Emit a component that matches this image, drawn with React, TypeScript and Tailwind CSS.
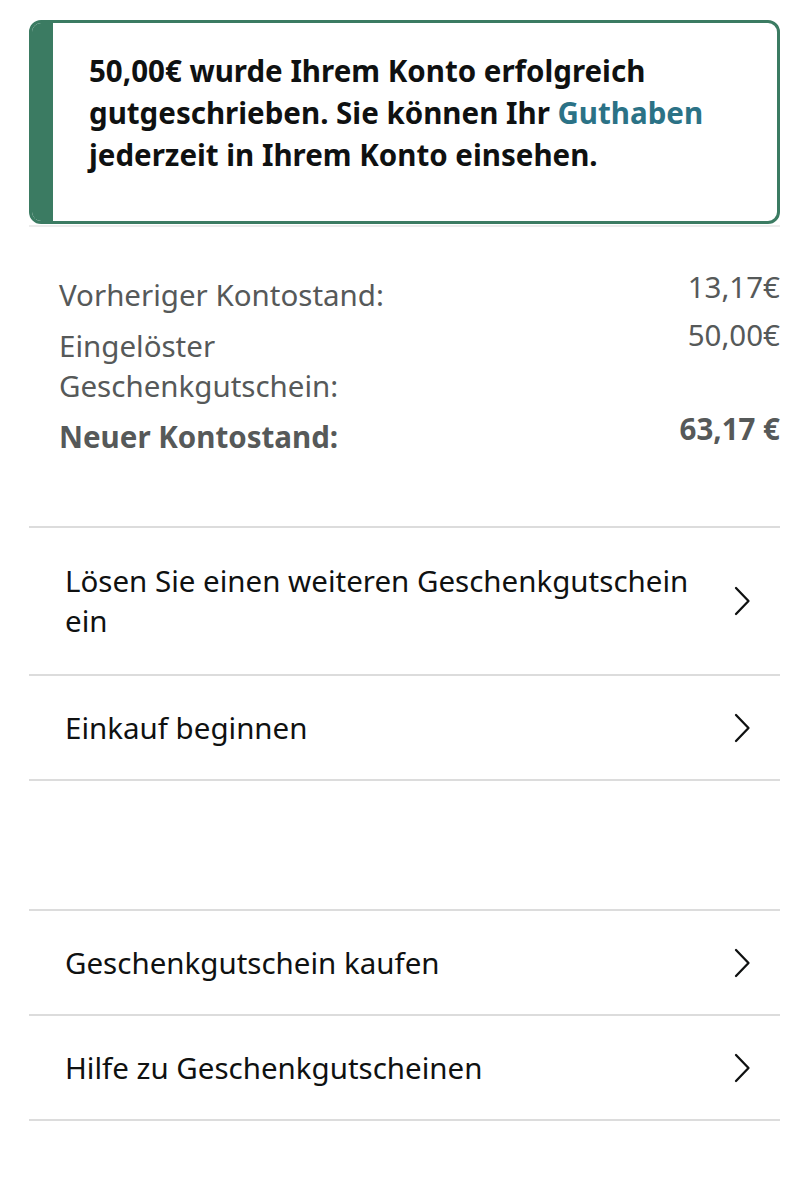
const rows1 = ['Lösen Sie einen weiteren Geschenkgutschein ein', 'Einkauf beginnen'];
const rows2 = ['Geschenkgutschein kaufen', 'Hilfe zu Geschenkgutscheinen'];

function Chevron() {
  return (
    <svg width="18" height="30" viewBox="0 0 18 30" fill="none" className="shrink-0">
      <path d="M3 2 L15.5 15 L3 28" stroke="#0f1111" strokeWidth="2.3" strokeLinecap="round" strokeLinejoin="round" />
    </svg>
  );
}

function LinkRow({ label }: { label: string }) {
  return (
    <div className="flex items-center justify-between border-b-2 border-[#dcdcdc] py-[31px] pl-9 pr-[29px]">
      <span className="max-w-[640px] text-[29.5px] leading-[41px] text-[#0f1111]">{label}</span>
      <Chevron />
    </div>
  );
}

export default function App() {
  return (
    <div className="min-h-[1200px] bg-white pt-5 pl-[29px] pr-[30px] font-['Noto_Sans',sans-serif]">
      <div className="flex overflow-hidden rounded-[12px] border-[3px] border-[#3b7b62]">
        <div className="w-[21px] shrink-0 bg-[#3b7b62]" />
        <div className="flex-1 pt-[27px] pb-[45px] pl-9 pr-4">
          <p className="text-[29.5px] font-bold leading-[42px] text-[#0f1111]">
            50,00€ wurde Ihrem Konto erfolgreich gutgeschrieben. Sie können Ihr{' '}
            <span className="text-[#2b7286]">Guthaben</span> jederzeit in Ihrem Konto einsehen.
          </p>
        </div>
      </div>
      <div className="mt-[1px] h-[2px] bg-[#ececec]" />

      <div className="grid grid-cols-[1fr_auto] gap-x-4 pt-[40px] pb-[69px] pl-[30px] text-[29.5px] leading-[40px] text-[#565959]">
        <span className="max-w-[360px] pt-2">Vorheriger Kontostand:</span>
        <span className="text-right">13,17€</span>
        <span className="max-w-[360px] pt-[11px]">Eingelöster Geschenkgutschein:</span>
        <span className="text-right">50,00€</span>
        <span className="pt-[11px] font-bold">Neuer Kontostand:</span>
        <span className="pt-[3px] text-right font-bold">63,17 €</span>
      </div>

      <div className="border-t-2 border-[#dcdcdc]">
        <div className="flex items-center justify-between border-b-2 border-[#dcdcdc] py-[33px] pl-9 pr-[29px]">
          <span className="max-w-[640px] text-[29.5px] leading-[40px] text-[#0f1111]">{rows1[0]}</span>
          <Chevron />
        </div>
        <LinkRow label={rows1[1]} />
      </div>

      <div className="mt-[128px] border-t-2 border-[#dcdcdc]">
        {rows2.map((r) => (
          <LinkRow key={r} label={r} />
        ))}
      </div>
    </div>
  );
}
